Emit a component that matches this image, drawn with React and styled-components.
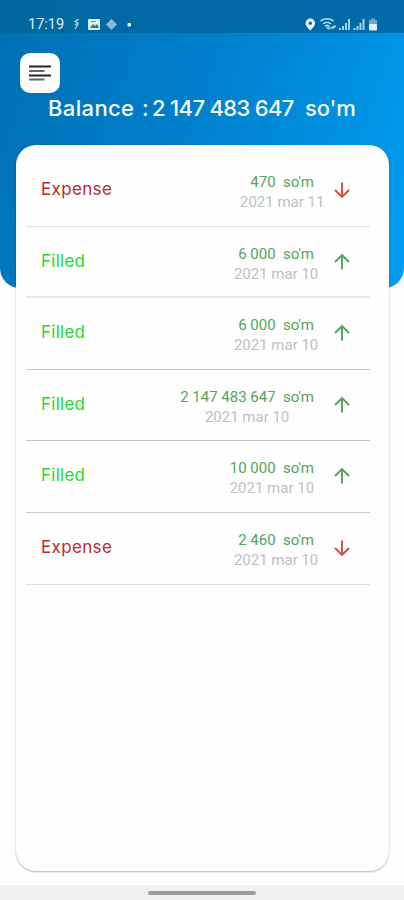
import React from "react";
import styled, { createGlobalStyle } from "styled-components";

const GlobalStyle = createGlobalStyle`
  * { box-sizing: border-box; }
  body { margin: 0; background: #fefefe; }
`;

const Screen = styled.div`
  display: grid;
  grid-template-rows: 288px 597px 15px;
  grid-template-columns: 404px;
  height: 900px;
  overflow: hidden;
  background: #fefefe;
`;

const Header = styled.header`
  grid-area: 1 / 1;
  border-radius: 0 0 20px 20px;
  overflow: hidden;
  background: linear-gradient(110deg, #006fb3 0%, #007fcb 45%, #0096e9 85%, #009df4 100%);
`;

const StatusBar = styled.div`
  display: flex;
  align-items: center;
  justify-content: space-between;
  height: 33px;
  padding: 14px 25px 0 28px;
  background: linear-gradient(90deg, #0068a0, #0069a5 50%, #006aa9);
  color: #d8eef5;
  font: 400 14.5px/19px Roboto, sans-serif;
`;

const StatusGroup = styled.div`
  display: flex;
  align-items: center;
  height: 19px;
`;

const Clock = styled.span`
  width: 45px;
  padding-top: 1px;
`;

const MenuButton = styled.button`
  display: flex;
  align-items: center;
  justify-content: center;
  width: 40px;
  height: 40px;
  margin: 20px 0 0 20px;
  padding: 0;
  border: 0;
  border-radius: 10px;
  background: #fff;
`;

const Balance = styled.h1`
  display: flex;
  margin: 0 0 0 48px;
  color: #f4fbff;
  font: 500 22px/30px Inter, sans-serif;
`;

const BalancePart = styled.span`
  width: ${(p) => p.$width}px;
  letter-spacing: ${(p) => p.$tracking}px;
  white-space: nowrap;
`;

const Card = styled.main`
  grid-area: 1 / 1 / 3 / 2;
  z-index: 1;
  width: 373px;
  height: 726px;
  margin: 145px 0 0 16px;
  padding: 10px 19px 0 10px;
  border-radius: 20px;
  background: #fefefe;
  box-shadow: 0 1px 2px rgba(0, 0, 0, 0.28), 0 0 2px rgba(0, 0, 0, 0.06);
`;

const Row = styled.div`
  display: flex;
  align-items: flex-start;
  height: 71.6px;
  padding: 17px 19px 0 15px;
  border-bottom: ${(p) => p.$weight}px solid ${(p) => p.$line};
`;

const Kind = styled.div`
  flex: 1;
  padding-top: 4px;
  color: ${(p) => (p.$expense ? "#b8292e" : "#25d92f")};
  font: 400 17px/26px Inter, sans-serif;
  letter-spacing: ${(p) => (p.$expense ? "0.35px" : "0.25px")};
`;

const Details = styled.div`
  display: flex;
  flex-direction: column;
  align-items: center;
  margin-right: 19px;
`;

const Amount = styled.div`
  color: #56a35a;
  font: 400 15px/20px Roboto, sans-serif;
  white-space: pre;
`;

const DateText = styled.div`
  display: flex;
  justify-content: center;
  width: 0;
  color: #c0c0c0;
  font: 400 15px/20px Roboto, sans-serif;
  white-space: nowrap;
`;

const Arrow = styled.svg`
  width: 18px;
  height: 18px;
  margin-top: 9px;
  transform: ${(p) => (p.$expense ? "rotate(180deg)" : "none")};
  stroke: ${(p) => (p.$expense ? "#d84b43" : "#4fa557")};
  stroke-width: 1.9;
  fill: none;
`;

const NavigationBar = styled.footer`
  grid-area: 3 / 1;
  display: flex;
  justify-content: center;
  padding-top: 6px;
  background: #f0f0f0;
`;

const HomeHandle = styled.div`
  width: 108px;
  height: 4px;
  border-radius: 2px;
  background: #9c9c9c;
`;

const entries = [
  { expense: true, amount: "470  so'm", date: "2021 mar 11", line: "#e2e2e2", weight: 1 },
  { amount: "6 000  so'm", date: "2021 mar 10", line: "#e7e7e7", weight: 2 },
  { amount: "6 000  so'm", date: "2021 mar 10", line: "#c8c8c8", weight: 1 },
  { amount: "2 147 483 647  so'm", date: "2021 mar 10", line: "#c5c5c5", weight: 1 },
  { amount: "10 000  so'm", date: "2021 mar 10", line: "#cccccc", weight: 1 },
  { expense: true, amount: "2 460  so'm", date: "2021 mar 10", line: "#dddddd", weight: 1 },
];

const NoticeIcons = () => (
  <svg width="62" height="16" viewBox="0 0 62 16" fill="none">
    <path d="M6 3 2 5.5l3 1.5-3 2M5 8l-1 2-2 3" stroke="#b5dce3" strokeWidth="1.3" />
    <rect x="15" y="3" width="12" height="11" rx="1" fill="#dcf1f5" />
    <path d="m17 12 3-4 2 2 2-2 2 4Z" fill="#277a9e" />
    <path d="M18 5h5v1h-5z" fill="#5599b3" />
    <path d="m38.5 3 5.5 5.5-5.5 5.5L33 8.5Z" fill="#8dbfda" />
    <path d="M36.5 6.5l4 4M40.5 6.5l-4 4" stroke="#73adcd" strokeWidth=".8" />
    <rect x="54.5" y="7" width="3.5" height="3.5" rx="1" fill="#e5f5fa" />
  </svg>
);

const DeviceIcons = () => (
  <svg width="76" height="16" viewBox="0 0 76 16" fill="none">
    <path fillRule="evenodd" d="M7.3 2.5a4.8 4.8 0 0 0-4.8 4.8c0 3.1 4.8 7.2 4.8 7.2s4.8-4.1 4.8-7.2a4.8 4.8 0 0 0-4.8-4.8Zm0 3a1.7 1.7 0 1 1 0 3.4 1.7 1.7 0 0 1 0-3.4Z" fill="#eaf7fa" />
    <path d="M17.5 5q6.5-4.5 13 0M20 8q4-3.5 8 0M22 10.4q2-2 4 0" stroke="#b6dce2" strokeWidth="1.6" />
    <path d="m24 12 2-1v2ZM32 9.5l-5 3M29 13l4-3" stroke="#9fd1dc" strokeWidth="1.3" />
    <path d="M37 14v-2M40 14v-4M43 14V7M46 14V3" stroke="#a5d2da" strokeWidth="2" />
    <path d="M51.5 14v-2M54.5 14v-4M57.5 14V7M60.5 14V3" stroke="#a5d2da" strokeWidth="2" />
    <path d="M66 4h2V2.5h4V4h2v5h-8Z" fill="#6aa9c7" />
    <rect x="66" y="8" width="8" height="6.5" rx="1" fill="#e4f3f7" />
  </svg>
);

const MenuIcon = () => (
  <svg width="22" height="18" viewBox="0 0 22 18" fill="none" strokeWidth="1.8">
    <path d="M0 2.5h22M0 11.5h22" stroke="#242424" />
    <path d="M0 7h15.5M0 15.5h15.5" stroke="#686868" />
  </svg>
);

export default function App() {
  return (
    <>
      <GlobalStyle />
      <Screen>
        <Header>
          <StatusBar>
            <StatusGroup><Clock>17:19</Clock><NoticeIcons /></StatusGroup>
            <StatusGroup><DeviceIcons /></StatusGroup>
          </StatusBar>
          <MenuButton aria-label="Menu"><MenuIcon /></MenuButton>
          <Balance>
            <BalancePart $width={94} $tracking={0.35}>Balance</BalancePart>
            <BalancePart $width={10} $tracking={0}>:</BalancePart>
            <BalancePart $width={153} $tracking={-0.65}>2 147 483 647</BalancePart>
            <BalancePart $width={52} $tracking={-0.1}>so'm</BalancePart>
          </Balance>
        </Header>
        <Card>
          {entries.map((entry, index) => (
            <Row key={index} $line={entry.line} $weight={entry.weight}>
              <Kind $expense={entry.expense}>{entry.expense ? "Expense" : "Filled"}</Kind>
              <Details>
                <Amount>{entry.amount}</Amount>
                <DateText>{entry.date}</DateText>
              </Details>
              <Arrow $expense={entry.expense} viewBox="0 0 18 18">
                <path d="M9 16.5V2M2 9l7-7 7 7" />
              </Arrow>
            </Row>
          ))}
        </Card>
        <NavigationBar><HomeHandle /></NavigationBar>
      </Screen>
    </>
  );
}
